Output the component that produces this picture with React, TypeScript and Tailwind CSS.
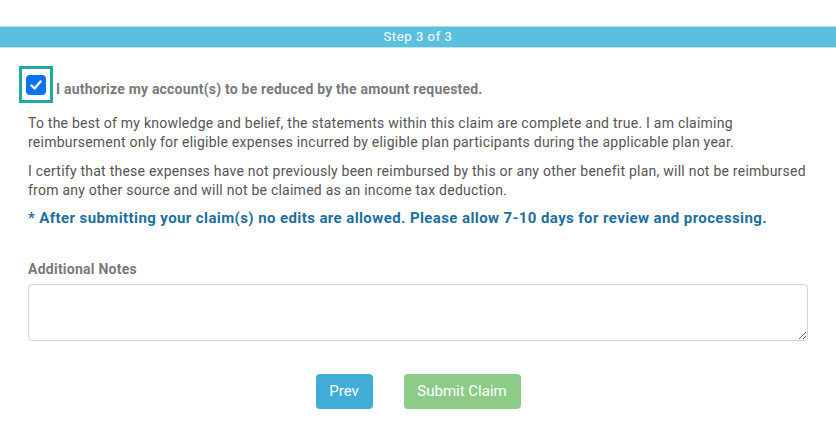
import React from "react";

export default function App() {
  return (
    <div className="w-[836px] h-[430px] bg-white" style={{ fontFamily: "Roboto, 'Liberation Sans', sans-serif" }}>
      <div className="h-[26px]" />
      <div className="h-[22px] bg-[#5bc0de] border-t border-b border-t-[#a8dcec] border-b-[#bfe5f1] flex items-center justify-center">
        <span className="text-white text-[13px] tracking-[0.6px]">Step 3 of 3</span>
      </div>
      <div className="pl-[28px] pr-[28px]">
        <div className="flex items-center mt-[18px] ml-[-9px]">
          <div className="w-[34px] h-[37px] border-[3px] border-[#20a9a1] flex items-center justify-center">
            <div className="w-[20px] h-[20px] rounded-[4px] bg-[#0b72f0] flex items-center justify-center">
              <svg width="14" height="14" viewBox="0 0 14 14">
                <path d="M2.5 7.5 L5.6 10.5 L11.5 3.5" stroke="white" strokeWidth="2.4" fill="none" strokeLinecap="round" strokeLinejoin="round" />
              </svg>
            </div>
          </div>
          <span className="ml-[3px] mt-[9px] text-[14px] font-bold text-[#7a7a7a] tracking-[0.2px]">I authorize my account(s) to be reduced by the amount requested.</span>
        </div>
        <p className="mt-[11px] text-[14px] leading-[19px] text-[#555] tracking-[0.24px] w-[780px]">
          To the best of my knowledge and belief, the statements within this claim are complete and true. I am claiming reimbursement only for eligible expenses incurred by eligible plan participants during the applicable plan year.
        </p>
        <p className="mt-[10px] text-[14px] leading-[19px] text-[#555] tracking-[0.24px] w-[780px]">
          I certify that these expenses have not previously been reimbursed by this or any other benefit plan, will not be reimbursed from any other source and will not be claimed as an income tax deduction.
        </p>
        <p className="mt-[8px] text-[15px] leading-[20px] font-bold text-[#1e6f9e] tracking-[0.4px]">
          * After submitting your claim(s) no edits are allowed. Please allow 7-10 days for review and processing.
        </p>
        <div className="mt-[33px] text-[14px] font-bold text-[#7a7a7a] leading-[16px] tracking-[0.25px]">Additional Notes</div>
        <textarea className="mt-[7px] block w-[780px] h-[57px] border border-[#d4d4d4] rounded-[4px] resize-y outline-none" />
        <div className="flex justify-center gap-[31px] mt-[33px] ml-[-28px] w-[836px]">
          <button className="w-[57px] h-[35px] rounded-[4px] bg-[#41acd5] text-white text-[15px]">Prev</button>
          <button className="w-[117px] h-[35px] rounded-[4px] bg-[#8ccc88] text-white text-[15px]">Submit Claim</button>
        </div>
      </div>
    </div>
  );
}
